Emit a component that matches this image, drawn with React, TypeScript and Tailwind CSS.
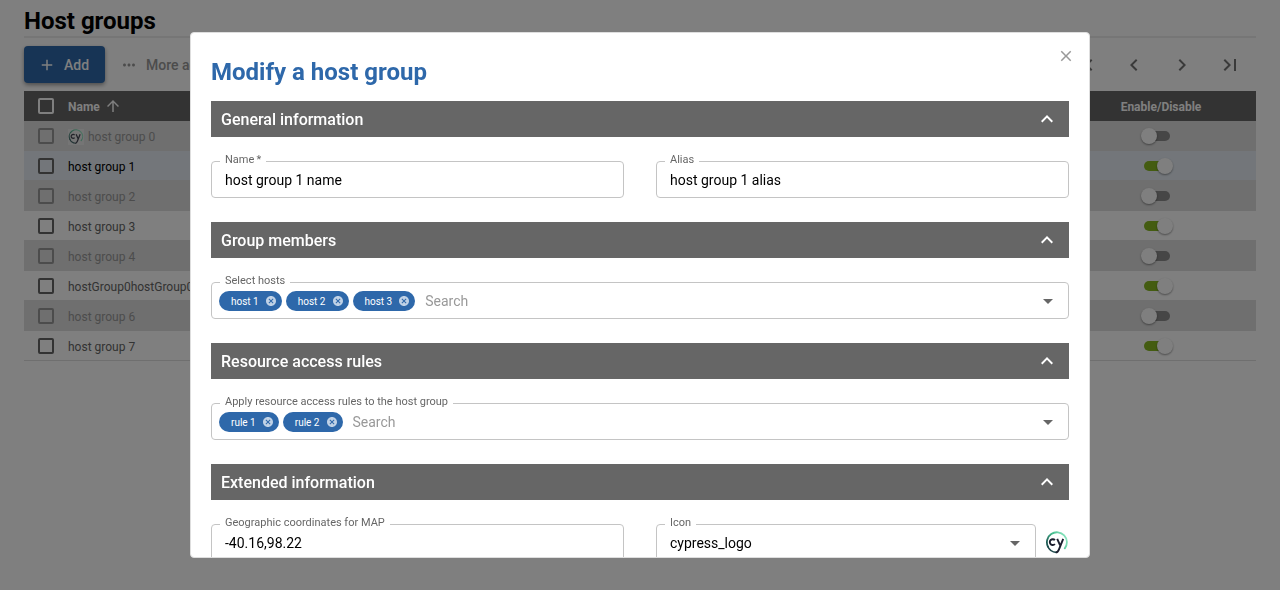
import React, { useId, useState } from "react";
import {
  MdAdd,
  MdArrowDropDown,
  MdArrowUpward,
  MdCancel,
  MdChevronLeft,
  MdChevronRight,
  MdClose,
  MdExpandLess,
  MdFirstPage,
  MdLastPage,
  MdMoreHoriz,
} from "react-icons/md";

type HostGroup = { name: string; enabled: boolean; icon?: boolean };

const initialGroups: HostGroup[] = [
  { name: "host group 0", enabled: false, icon: true },
  { name: "host group 1", enabled: true },
  { name: "host group 2", enabled: false },
  { name: "host group 3", enabled: true },
  { name: "host group 4", enabled: false },
  { name: "hostGroup0hostGroup0", enabled: true },
  { name: "host group 6", enabled: false },
  { name: "host group 7", enabled: true },
];

function CypressLogo({ className }: { className: string }) {
  const id = useId();
  return (
    <svg viewBox="0 0 24 24" className={className} role="img" aria-label="cypress_logo">
      <defs>
        <linearGradient id={id} x1="0" y1="0.7" x2="1" y2="0.3">
          <stop offset="0" stopColor="#1f5a55" />
          <stop offset="0.45" stopColor="#45bd8e" />
          <stop offset="1" stopColor="#8fe8c2" />
        </linearGradient>
      </defs>
      <path
        d="M2.9 15.6A10 10 0 1 1 19.8 17.4"
        fill="none"
        stroke={`url(#${id})`}
        strokeWidth="1.8"
        strokeLinecap="round"
      />
      <path d="M2.6 15A10 10 0 0 0 11.4 21.4" fill="none" stroke="#1f4a4c" strokeWidth="1.6" />
      <path
        d="M9.9 9.2A2.9 2.9 0 1 0 9.9 13M12.2 7.8L15 14.2M18.2 7.8L14 18.4Q12.9 21.4 10.8 21.4"
        fill="none"
        stroke="#1b1e2e"
        strokeWidth="1.9"
      />
    </svg>
  );
}

function RowCheckbox({ label, tone }: { label: string; tone: string }) {
  return (
    <input
      type="checkbox"
      aria-label={label}
      className={`block size-4 appearance-none rounded-xs border-2 ${tone}`}
    />
  );
}

function Section({ title, children }: { title: string; children: React.ReactNode }) {
  const [open, setOpen] = useState(true);
  return (
    <section>
      <h3>
        <button
          type="button"
          aria-expanded={open}
          onClick={() => setOpen(!open)}
          className="flex h-9 w-full items-center justify-between bg-[#666666] px-2.5 text-base font-medium text-white"
        >
          <span className="pt-0.5">{title}</span>
          <MdExpandLess className={open ? "size-6" : "size-6 rotate-180"} />
        </button>
      </h3>
      {open && <div className="py-6">{children}</div>}
    </section>
  );
}

function Field({ id, label, children }: { id: string; label: string; children: React.ReactNode }) {
  return (
    <div className="relative flex h-[37px] min-w-0 flex-1 items-center rounded border border-[#c4c4c4]">
      <label htmlFor={id} className="absolute -top-2 left-2 bg-white px-[5px] text-[11px] leading-3 text-[#666666]">
        {label}
      </label>
      {children}
    </div>
  );
}

function TextField({ id, label, value }: { id: string; label: string; value: string }) {
  return (
    <Field id={id} label={label}>
      <input id={id} defaultValue={value} className="h-full w-full bg-transparent px-[13px] text-sm outline-none" />
    </Field>
  );
}

function ChipField({ id, label, items }: { id: string; label: string; items: string[] }) {
  const [chips, setChips] = useState(items);
  return (
    <Field id={id} label={label}>
      <div className="flex w-full items-center gap-1 pr-2 pl-[7px]">
        {chips.map((chip) => (
          <span
            key={chip}
            className="flex h-5 items-center gap-1.5 rounded-full bg-[#2e68aa] pr-[5px] pl-3 text-[10px] text-white"
          >
            <span className="pt-0.5">{chip}</span>
            <button
              type="button"
              aria-label={`Remove ${chip}`}
              onClick={() => setChips(chips.filter((c) => c !== chip))}
            >
              <MdCancel className="size-3 text-white/70" />
            </button>
          </span>
        ))}
        <input
          id={id}
          placeholder="Search"
          className="min-w-0 flex-1 px-1.5 text-sm outline-none placeholder:text-[#999999]"
        />
        <button type="button" aria-label={`Open ${label}`}>
          <MdArrowDropDown className="size-6 text-[#666666]" />
        </button>
      </div>
    </Field>
  );
}

export default function App() {
  const [groups, setGroups] = useState(initialGroups);
  const toggle = (index: number) =>
    setGroups(groups.map((g, i) => (i === index ? { ...g, enabled: !g.enabled } : g)));

  return (
    <div className="min-h-screen bg-white px-6 font-[Roboto,sans-serif] text-black">
      <header className="border-b-2 border-[#ededed] pt-1.5">
        <h1 className="text-2xl leading-[30px] font-bold">Host groups</h1>
      </header>
      <div className="flex items-center justify-between py-2 pr-0.5">
        <div className="flex items-center gap-2.5">
          <button
            type="button"
            className="flex h-[37px] items-center gap-2 rounded bg-[#2e68aa] pr-4 pl-3.5 text-sm font-medium text-white shadow-[0_2px_4px_rgba(0,0,0,0.4)]"
          >
            <MdAdd className="size-[18px]" />
            Add
          </button>
          <button type="button" className="flex items-center gap-2 px-[5px] text-sm font-medium text-[#999999]">
            <MdMoreHoriz className="size-[18px]" />
            More actions
          </button>
        </div>
        <nav aria-label="Pagination" className="flex text-[#757575]">
          <button type="button" aria-label="First page" className="flex w-12 justify-center">
            <MdFirstPage className="size-6" />
          </button>
          <button type="button" aria-label="Previous page" className="flex w-12 justify-center">
            <MdChevronLeft className="size-6" />
          </button>
          <button type="button" aria-label="Next page" className="flex w-12 justify-center">
            <MdChevronRight className="size-6" />
          </button>
          <button type="button" aria-label="Last page" className="flex w-12 justify-center">
            <MdLastPage className="size-6" />
          </button>
        </nav>
      </div>
      <table className="w-full table-fixed border-separate border-spacing-0 text-left text-xs">
        <thead>
          <tr className="h-[30px] bg-[#666666] text-white">
            <th className="w-11 pl-3.5">
              <RowCheckbox label="Select all" tone="border-white" />
            </th>
            <th className="font-bold">
              <span className="flex items-center gap-1">
                <span className="pt-px">Name</span>
                <MdArrowUpward className="size-[18px]" />
              </span>
            </th>
            <th className="w-[190px] pt-px text-center font-bold">Enable/Disable</th>
          </tr>
        </thead>
        <tbody>
          {groups.map((group, index) => (
            <tr
              key={group.name}
              className={`h-[30px] *:border-b *:border-[#dedede] ${
                index === 1
                  ? "bg-[#e6edf5] text-black"
                  : group.enabled
                    ? "text-[#666666]"
                    : "bg-[#dedede] text-[#999999]"
              }`}
            >
              <td className="pl-3.5">
                <RowCheckbox
                  label={`Select ${group.name}`}
                  tone={group.enabled ? "border-[#666666]" : "border-[#999999]"}
                />
              </td>
              <td className="pt-0.5">
                <span className="flex items-center gap-1">
                  {group.icon && (
                    <span className="bg-white/40">
                      <CypressLogo className="size-4 opacity-80" />
                    </span>
                  )}
                  {group.name}
                </span>
              </td>
              <td className="pr-2">
                <input
                  type="checkbox"
                  role="switch"
                  aria-label={`Enable ${group.name}`}
                  checked={group.enabled}
                  onChange={() => toggle(index)}
                  className="relative mx-auto block h-2.5 w-[26px] appearance-none rounded-full bg-[#8c8c8c] before:absolute before:-top-[3px] before:-left-[3px] before:size-4 before:rounded-full before:bg-white before:shadow-[0_1px_2px_rgba(0,0,0,0.4)] checked:bg-[#88b922] checked:before:left-[13px]"
                />
              </td>
            </tr>
          ))}
        </tbody>
      </table>

      <div className="fixed inset-0 flex justify-center bg-black/50 p-8">
        <div
          role="dialog"
          aria-modal="true"
          aria-labelledby="dialog-title"
          className="relative flex w-full max-w-[900px] flex-col overflow-hidden rounded border border-[#dedede] bg-white"
        >
          <button
            type="button"
            aria-label="Close"
            className="absolute top-3.5 right-3.5 text-[#999999]"
          >
            <MdClose className="size-[18px]" />
          </button>
          <div className="overflow-y-auto p-5 [scrollbar-width:none]">
            <h2 id="dialog-title" className="pt-px pb-[11px] text-2xl leading-9 font-bold text-[#2e68aa]">
              Modify a host group
            </h2>
            <form>
              <Section title="General information">
                <div className="flex gap-8">
                  <TextField id="name" label={"Name\u2009*"} value="host group 1 name" />
                  <TextField id="alias" label="Alias" value="host group 1 alias" />
                </div>
              </Section>
              <Section title="Group members">
                <ChipField id="hosts" label="Select hosts" items={["host 1", "host 2", "host 3"]} />
              </Section>
              <Section title="Resource access rules">
                <ChipField
                  id="rules"
                  label="Apply resource access rules to the host group"
                  items={["rule 1", "rule 2"]}
                />
              </Section>
              <Section title="Extended information">
                <div className="grid grid-cols-2 gap-8">
                  <TextField id="coordinates" label="Geographic coordinates for MAP" value="-40.16,98.22" />
                  <div className="flex items-center gap-[9px]">
                    <Field id="icon" label="Icon">
                      <select
                        id="icon"
                        className="h-full w-full appearance-none bg-transparent px-[13px] text-sm outline-none"
                      >
                        <option>cypress_logo</option>
                      </select>
                      <MdArrowDropDown className="pointer-events-none absolute right-2 size-6 text-[#666666]" />
                    </Field>
                    <CypressLogo className="size-6" />
                  </div>
                </div>
              </Section>
            </form>
          </div>
        </div>
      </div>
    </div>
  );
}
